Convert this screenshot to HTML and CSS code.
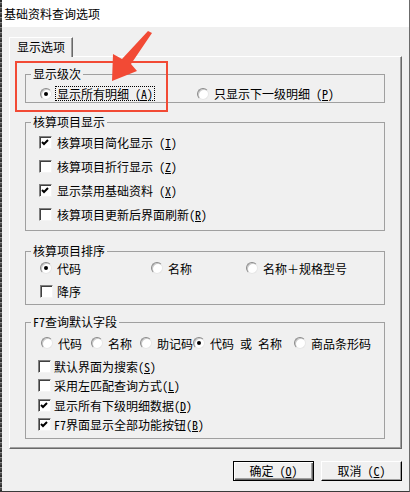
FILE: index.html
```html
<!DOCTYPE html>
<html lang="zh-CN">
<head>
<meta charset="utf-8">
<title>基础资料查询选项</title>
<link rel="stylesheet" href="styles.css">
</head>
<body>
<div class="window">
  <div class="titlebar">基础资料查询选项</div>
  <div class="client">
    <div class="tabs"><div class="tab">显示选项</div></div>
    <div class="panel">
      <fieldset class="group g1">
        <legend>显示级次</legend>
        <div class="radios cols1">
          <label class="opt"><span class="radio on"></span><span class="focus">显示所有明细 (<u>A</u>)</span></label>
          <label class="opt"><span class="radio"></span><span>只显示下一级明细 (<u>P</u>)</span></label>
        </div>
      </fieldset>

      <fieldset class="group g2">
        <legend>核算项目显示</legend>
        <label class="opt chk2"><span class="check"><svg viewBox="0 0 11 11" width="11" height="11"><polyline points="2,5 4,7 8,3"/></svg></span><span>核算项目简化显示 (<u>I</u>)</span></label>
        <label class="opt chk2"><span class="check"></span><span>核算项目折行显示 (<u>Z</u>)</span></label>
        <label class="opt chk2"><span class="check"><svg viewBox="0 0 11 11" width="11" height="11"><polyline points="2,5 4,7 8,3"/></svg></span><span>显示禁用基础资料 (<u>X</u>)</span></label>
        <label class="opt chk2"><span class="check"></span><span>核算项目更新后界面刷新(<u>R</u>)</span></label>
      </fieldset>

      <fieldset class="group g3">
        <legend>核算项目排序</legend>
        <div class="radios cols3">
          <label class="opt"><span class="radio on"></span><span>代码</span></label>
          <label class="opt"><span class="radio"></span><span>名称</span></label>
          <label class="opt"><span class="radio"></span><span>名称＋规格型号</span></label>
        </div>
        <label class="opt chk3"><span class="check"></span><span>降序</span></label>
      </fieldset>

      <fieldset class="group g4">
        <legend>F7查询默认字段</legend>
        <div class="radios cols4">
          <label class="opt"><span class="radio"></span><span>代码</span></label>
          <label class="opt"><span class="radio"></span><span>名称</span></label>
          <label class="opt"><span class="radio"></span><span>助记码</span></label>
          <label class="opt"><span class="radio on"></span><span>代码 或 名称</span></label>
          <label class="opt"><span class="radio"></span><span>商品条形码</span></label>
        </div>
        <div class="checks4">
          <label class="opt chk4"><span class="check"></span><span>默认界面为搜索(<u>S</u>)</span></label>
          <label class="opt chk4"><span class="check"></span><span>采用左匹配查询方式(<u>L</u>)</span></label>
          <label class="opt chk4"><span class="check"><svg viewBox="0 0 11 11" width="11" height="11"><polyline points="2,5 4,7 8,3"/></svg></span><span>显示所有下级明细数据(<u>D</u>)</span></label>
          <label class="opt chk4"><span class="check"><svg viewBox="0 0 11 11" width="11" height="11"><polyline points="2,5 4,7 8,3"/></svg></span><span>F7界面显示全部功能按钮(<u>B</u>)</span></label>
        </div>
      </fieldset>

      <div class="highlight"></div>
    </div>
    <div class="buttons">
      <button class="btn default">确定 (<u>O</u>)</button>
      <button class="btn">取消 (<u>C</u>)</button>
    </div>
  </div>
  <svg class="arrow" viewBox="0 0 60 60" width="60" height="60">
    <polygon points="48,3 52,5 31,36 37,43 12,53 13,26 22,31"/>
  </svg>
</div>
</body>
</html>
```

FILE: styles.css
```css
html, body {
  margin: 0;
  padding: 0;
  background: #f0f0f0;
}

body {
  font-family: "Noto Sans Mono CJK SC", "Noto Sans CJK SC", "Noto Sans", sans-serif;
  font-size: 12px;
  color: #000;
}

.window {
  position: relative;
  width: 410px;
  height: 492px;
  box-sizing: border-box;
  border-right: 1px solid #6b6b6b;
  border-bottom: 1px solid #3a3a3a;
  background: #f0f0f0;
  overflow: hidden;
}

.window::before {
  content: "";
  position: absolute;
  left: 0;
  top: 0;
  bottom: 0;
  width: 2px;
  background: repeating-linear-gradient(#2e2e2e 0 2px, #8a8a8a 2px 3px, #4a4a4a 3px 5px);
  z-index: 2;
}

.titlebar {
  height: 27px;
  line-height: 28px;
  padding-left: 4px;
  background: #fff;
  overflow: hidden;
}

.tabs {
  display: flex;
  padding: 10px 0 0 9px;
}

.tab {
  position: relative;
  z-index: 1;
  width: 64px;
  height: 20px;
  box-sizing: border-box;
  margin-bottom: -1px;
  padding-left: 7px;
  line-height: 17px;
  background: #f0f0f0;
  border-top: 1px solid #fff;
  border-left: 1px solid #fff;
  border-right: 1px solid #696969;
  box-shadow: inset -1px 0 0 #a0a0a0;
}

.panel {
  position: relative;
  margin-left: 9px;
  width: 393px;
  height: 393px;
  box-sizing: border-box;
  padding: 0 16px 0 15px;
  border-top: 1px solid #fff;
  border-left: 1px solid #fff;
  border-right: 1px solid #696969;
  border-bottom: 1px solid #696969;
  box-shadow: inset -1px -1px 0 #a0a0a0;
}

.group {
  margin: 0;
  padding: 0;
  min-width: 0;
  border: 1px solid #a0a0a0;
}

.group legend {
  margin-left: 5px;
  padding: 0 2px;
  line-height: 14px;
  font-size: 12px;
}

.g1 { margin-top: 10px; padding: 4px 0 1px; }
.g2 { margin-top: 12px; padding: 1px 0 4px; }
.g3 { margin-top: 13px; padding: 0 0 3px; }
.g4 { margin-top: 10px; padding: 4px 0 3.75px; }

.opt {
  display: flex;
  align-items: center;
  gap: 5px;
  white-space: nowrap;
}

u {
  text-decoration: underline;
  text-underline-offset: 1px;
}

.radios {
  display: grid;
  align-items: center;
}

.cols1 {
  grid-template-columns: 157px auto;
  height: 16px;
  padding-left: 14px;
}

.focus {
  margin-left: -1px;
  padding: 0 1px;
  line-height: 13px;
  outline: 1px dotted #000;
}

.chk2 {
  height: 24px;
  padding-left: 13px;
}

.cols3 {
  grid-template-columns: 111px 95px auto;
  height: 20px;
  padding-left: 14px;
}

.chk3 {
  height: 20px;
  margin-top: 3px;
  padding-left: 14px;
  gap: 4px;
}

.cols4 {
  grid-template-columns: 50px 49px 53px 101px auto;
  height: 20px;
  padding-left: 15px;
}

.checks4 {
  margin-top: 3.25px;
}

.chk4 {
  height: 19.5px;
  padding-left: 12px;
  gap: 3px;
}

.radio {
  position: relative;
  flex: none;
  width: 12px;
  height: 12px;
  box-sizing: border-box;
  border-radius: 50%;
  background: #fff;
  border: 1px solid;
  border-color: #8a8a8a #e6e6e6 #e6e6e6 #8a8a8a;
  box-shadow: inset 1px 1px 0 #c8c8c8;
}

.radio.on::after {
  content: "";
  position: absolute;
  left: 3px;
  top: 3px;
  width: 4px;
  height: 4px;
  border-radius: 50%;
  background: #000;
}

.check {
  flex: none;
  width: 13px;
  height: 13px;
  box-sizing: border-box;
  background: #fff;
  border: 1px solid;
  border-color: #808080 #f4f4f4 #f4f4f4 #808080;
  box-shadow: inset 1px 1px 0 #404040;
  display: flex;
}

.check svg {
  display: block;
}

.check polyline {
  fill: none;
  stroke: #000;
  stroke-width: 2;
}

.highlight {
  position: absolute;
  left: 5px;
  top: 4px;
  width: 153px;
  height: 51px;
  box-sizing: border-box;
  border: 2px solid #f24a35;
}

.buttons {
  display: flex;
  justify-content: flex-end;
  gap: 7px;
  margin-top: 12px;
  padding-right: 7px;
}

.btn {
  width: 81px;
  height: 20px;
  box-sizing: border-box;
  padding: 0;
  margin: 0;
  font: inherit;
  line-height: 16px;
  color: #000;
  background: #f0f0f0;
  border: 1px solid;
  border-color: #fff #000 #000 #fff;
  box-shadow: inset -1px -1px 0 #a0a0a0;
}

.btn.default {
  border-color: #000;
  box-shadow: inset 1px 1px 0 #fff, inset -1px -1px 0 #696969, inset -2px -2px 0 #a0a0a0;
}

.arrow {
  position: absolute;
  left: 100px;
  top: 28px;
  z-index: 3;
}

.arrow polygon {
  fill: #f24a35;
}
```
